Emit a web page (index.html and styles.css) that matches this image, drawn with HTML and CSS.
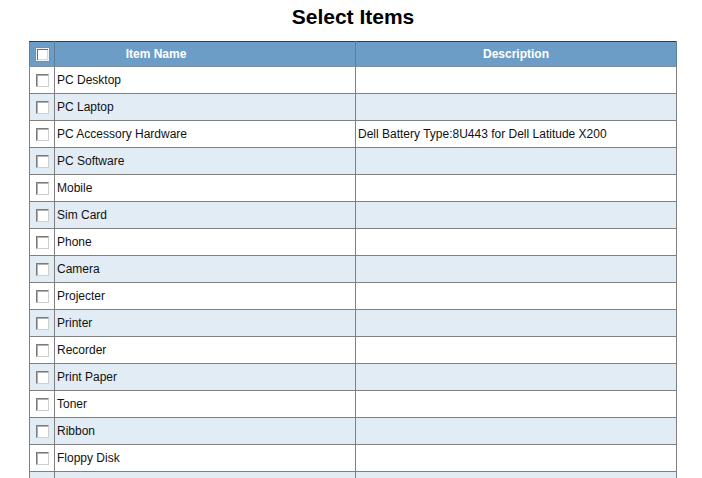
FILE: index.html
```html
<!DOCTYPE html>
<html>
<head>
<meta charset="utf-8">
<link rel="stylesheet" href="styles.css">
</head>
<body>
<h1 class="title">Select Items</h1>
<table class="grid">
  <thead>
    <tr>
      <th class="c-check"><span class="box box-head"></span></th>
      <th class="c-name">Item Name</th>
      <th class="c-desc">Description</th>
    </tr>
  </thead>
  <tbody>
    <tr><td class="c-check"><span class="box"></span></td><td>PC Desktop</td><td></td></tr>
    <tr class="alt"><td class="c-check"><span class="box"></span></td><td>PC Laptop</td><td></td></tr>
    <tr><td class="c-check"><span class="box"></span></td><td>PC Accessory Hardware</td><td>Dell Battery Type:8U443 for Dell Latitude X200</td></tr>
    <tr class="alt"><td class="c-check"><span class="box"></span></td><td>PC Software</td><td></td></tr>
    <tr><td class="c-check"><span class="box"></span></td><td>Mobile</td><td></td></tr>
    <tr class="alt"><td class="c-check"><span class="box"></span></td><td>Sim Card</td><td></td></tr>
    <tr><td class="c-check"><span class="box"></span></td><td>Phone</td><td></td></tr>
    <tr class="alt"><td class="c-check"><span class="box"></span></td><td>Camera</td><td></td></tr>
    <tr><td class="c-check"><span class="box"></span></td><td>Projecter</td><td></td></tr>
    <tr class="alt"><td class="c-check"><span class="box"></span></td><td>Printer</td><td></td></tr>
    <tr><td class="c-check"><span class="box"></span></td><td>Recorder</td><td></td></tr>
    <tr class="alt"><td class="c-check"><span class="box"></span></td><td>Print Paper</td><td></td></tr>
    <tr><td class="c-check"><span class="box"></span></td><td>Toner</td><td></td></tr>
    <tr class="alt"><td class="c-check"><span class="box"></span></td><td>Ribbon</td><td></td></tr>
    <tr><td class="c-check"><span class="box"></span></td><td>Floppy Disk</td><td></td></tr>
    <tr class="alt"><td class="c-check"></td><td></td><td></td></tr>
  </tbody>
</table>
</body>
</html>
```
FILE: styles.css
```css
html, body {
  margin: 0;
  padding: 0;
  background: #ffffff;
}
body {
  font-family: "Liberation Sans", Arial, sans-serif;
  color: #000;
}
.title {
  margin: 0;
  padding: 5px 0 0 4px;
  height: 36px;
  box-sizing: border-box;
  text-align: center;
  font-size: 21px;
  font-weight: bold;
  line-height: 24px;
}
.grid {
  border-collapse: collapse;
  width: 648px;
  margin: 5px 0 0 29px;
  table-layout: fixed;
  font-size: 12px;
}
.grid th {
  background: #6b9dc7;
  color: #ffffff;
  font-weight: bold;
  height: 24px;
  padding: 0;
  border-top: 1px solid #2f3d4a;
  border-left: 1px solid #5a7f9f;
  border-right: 1px solid #5a7f9f;
  border-bottom: 1px solid #7f8f9c;
  text-align: center;
}
.grid td {
  height: 26px;
  padding: 0 0 0 2px;
  border: 1px solid #808080;
  white-space: nowrap;
  overflow: hidden;
  color: #111;
}
.grid tr.alt td {
  background: #e2ecf4;
}
.c-check {
  width: 24px;
  text-align: center;
}
.grid td.c-check {
  padding: 0;
}
.grid th.c-name {
  width: 202px;
  padding-right: 98px;
}
.box {
  display: inline-block;
  width: 11px;
  height: 11px;
  background: #ffffff;
  border-top: 1px solid #7a7a7a;
  border-left: 1px solid #7a7a7a;
  border-right: 1px solid #cfcfcf;
  border-bottom: 1px solid #cfcfcf;
  vertical-align: middle;
  box-shadow: inset 1px 1px 0 #b0b0b0;
}
.box-head {
  width: 11px;
  height: 11px;
  border: 1px solid #f2f2f2;
  box-shadow: inset 1px 1px 0 #6d6d6d, inset -1px -1px 0 #d8d8d8;
  outline: 1px solid #7a8f9f;
}
```
